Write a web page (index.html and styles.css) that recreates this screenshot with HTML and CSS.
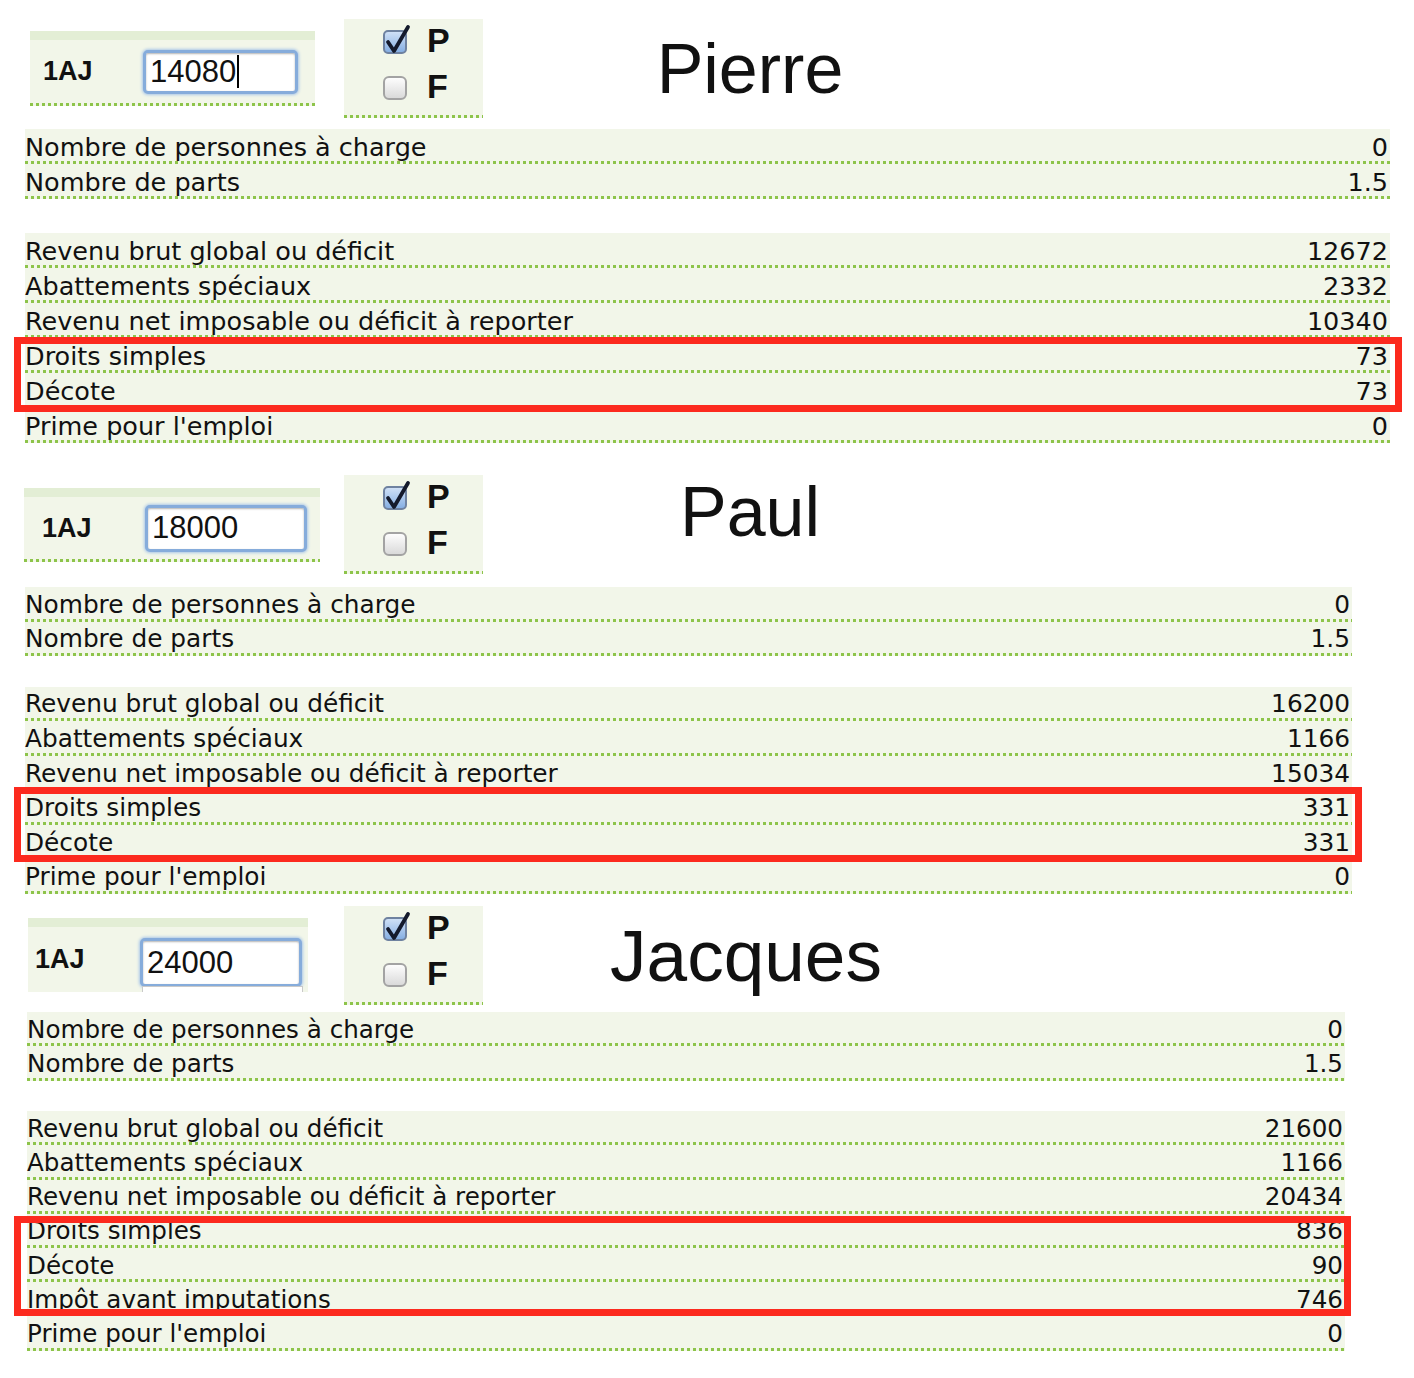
FILE: index.html
```html
<!DOCTYPE html>
<html lang="fr">
<head>
    <meta charset="UTF-8">
    <title>Simulation impôt - 1AJ</title>
    <link rel="stylesheet" href="styles.css">
</head>
<body>

    <!-- Pierre -->
    <section class="person pierre">
        <div class="top">
            <div class="aj-panel">
                <span class="aj-label">1AJ</span>
                <div class="aj-input">14080<span class="caret"></span></div>
            </div>
            <div class="pf-panel">
                <div class="pf-line">
                    <span class="box checked"><svg viewBox="0 0 28 30"><path d="M5 17 L11 26 L25 2"/></svg></span>
                    <b>P</b>
                </div>
                <div class="pf-line">
                    <span class="box"></span>
                    <b>F</b>
                </div>
            </div>
            <h1 class="name">Pierre</h1>
        </div>

        <div class="rows first">
            <div class="row"><span>Nombre de personnes à charge</span><span>0</span></div>
            <div class="row"><span>Nombre de parts</span><span>1.5</span></div>
        </div>

        <div class="rows second">
            <div class="row"><span>Revenu brut global ou déficit</span><span>12672</span></div>
            <div class="row"><span>Abattements spéciaux</span><span>2332</span></div>
            <div class="row"><span>Revenu net imposable ou déficit à reporter</span><span>10340</span></div>
            <div class="highlight">
                <div class="row"><span>Droits simples</span><span>73</span></div>
                <div class="row"><span>Décote</span><span>73</span></div>
            </div>
            <div class="row"><span>Prime pour l'emploi</span><span>0</span></div>
        </div>
    </section>

    <!-- Paul -->
    <section class="person paul">
        <div class="top">
            <div class="aj-panel">
                <span class="aj-label">1AJ</span>
                <div class="aj-input">18000</div>
            </div>
            <div class="pf-panel">
                <div class="pf-line">
                    <span class="box checked"><svg viewBox="0 0 28 30"><path d="M5 17 L11 26 L25 2"/></svg></span>
                    <b>P</b>
                </div>
                <div class="pf-line">
                    <span class="box"></span>
                    <b>F</b>
                </div>
            </div>
            <h1 class="name">Paul</h1>
        </div>

        <div class="rows first">
            <div class="row"><span>Nombre de personnes à charge</span><span>0</span></div>
            <div class="row"><span>Nombre de parts</span><span>1.5</span></div>
        </div>

        <div class="rows second">
            <div class="row"><span>Revenu brut global ou déficit</span><span>16200</span></div>
            <div class="row"><span>Abattements spéciaux</span><span>1166</span></div>
            <div class="row"><span>Revenu net imposable ou déficit à reporter</span><span>15034</span></div>
            <div class="highlight">
                <div class="row"><span>Droits simples</span><span>331</span></div>
                <div class="row"><span>Décote</span><span>331</span></div>
            </div>
            <div class="row"><span>Prime pour l'emploi</span><span>0</span></div>
        </div>
    </section>

    <!-- Jacques -->
    <section class="person jacques">
        <div class="top">
            <div class="aj-panel">
                <span class="aj-label">1AJ</span>
                <div class="aj-input">24000</div>
                <div class="suggest"></div>
            </div>
            <div class="pf-panel">
                <div class="pf-line">
                    <span class="box checked"><svg viewBox="0 0 28 30"><path d="M5 17 L11 26 L25 2"/></svg></span>
                    <b>P</b>
                </div>
                <div class="pf-line">
                    <span class="box"></span>
                    <b>F</b>
                </div>
            </div>
            <h1 class="name">Jacques</h1>
        </div>

        <div class="rows first">
            <div class="row"><span>Nombre de personnes à charge</span><span>0</span></div>
            <div class="row"><span>Nombre de parts</span><span>1.5</span></div>
        </div>

        <div class="rows second">
            <div class="row"><span>Revenu brut global ou déficit</span><span>21600</span></div>
            <div class="row"><span>Abattements spéciaux</span><span>1166</span></div>
            <div class="row"><span>Revenu net imposable ou déficit à reporter</span><span>20434</span></div>
            <div class="highlight">
                <div class="row"><span>Droits simples</span><span>836</span></div>
                <div class="row"><span>Décote</span><span>90</span></div>
                <div class="row"><span>Impôt avant imputations</span><span>746</span></div>
            </div>
            <div class="row"><span>Prime pour l'emploi</span><span>0</span></div>
        </div>
    </section>

</body>
</html>
```

FILE: styles.css
```css
/* Reset */
* {
    margin: 0;
    padding: 0;
    box-sizing: border-box;
}

body {
    font-family: "DejaVu Sans", sans-serif;
    color: #111;
    background-color: #fff;
}

/* Green dotted line + pale background, shared by panels and rows */
.aj-panel,
.pf-panel,
.row {
    background: linear-gradient(to right, #8dc44a 50%, transparent 50%) left bottom / 6px 3px repeat-x, #f2f6e9;
}

/* Header: 1AJ field, P/F boxes, name */
.top {
    display: flex;
    align-items: flex-start;
}

.aj-panel {
    position: relative;
    display: flex;
    align-items: center;
    border-top: 9px solid #e3eed5;
    padding-bottom: 3px;
}

.aj-label {
    font-family: "Liberation Sans", Arial, sans-serif;
    font-weight: bold;
    font-size: 27px;
}

.aj-input {
    display: flex;
    align-items: center;
    background-color: #fff;
    border: 3px solid #86acdb;
    border-radius: 5px;
    box-shadow: 0 0 3px 1px #a9c6e8, inset 0 1px 2px rgba(0, 0, 0, 0.3);
    padding-left: 4px;
    font-family: "Liberation Sans", Arial, sans-serif;
    font-size: 31px;
}

.caret {
    display: inline-block;
    width: 2px;
    height: 33px;
    background-color: #000;
    margin-left: 1px;
}

.pf-panel {
    width: 139px;
    height: 99px;
    padding-left: 39px;
}

.pf-line {
    display: flex;
    align-items: center;
    height: 46px;
}

.pf-line b {
    font-family: "Liberation Sans", Arial, sans-serif;
    font-size: 34px;
    margin-left: 20px;
    margin-top: -4px;
}

.box {
    position: relative;
    display: block;
    width: 24px;
    height: 24px;
    border: 2px solid #a3a3a3;
    border-radius: 6px;
    background: linear-gradient(#fdfdfd, #dadada);
}

.box.checked {
    border-color: #6f82a0;
    border-radius: 5px;
    background: linear-gradient(#cfe0f6, #86afe3);
}

.box svg {
    position: absolute;
    left: -2px;
    top: -7px;
    width: 28px;
    height: 30px;
    overflow: visible;
}

.box svg path {
    fill: none;
    stroke: #141a2c;
    stroke-width: 3.8;
    stroke-linecap: round;
    stroke-linejoin: round;
}

.name {
    align-self: center;
    width: 534px;
    text-align: center;
    font-family: "Liberation Sans", Arial, sans-serif;
    font-weight: normal;
    font-size: 70px;
    line-height: 1;
    color: #111;
}

/* Result rows */
.row {
    display: flex;
    justify-content: space-between;
    align-items: center;
    padding-right: 2px;
    white-space: nowrap;
}

.highlight {
    position: relative;
}

.highlight::after {
    content: "";
    position: absolute;
    border: 7px solid #fc2a1e;
}

/* Pierre */
.pierre {
    padding-top: 19px;
    font-size: 25.5px;
}

.pierre .aj-panel {
    margin: 12px 0 0 30px;
    width: 285px;
    height: 75px;
}

.pierre .aj-label {
    width: 113px;
    padding-left: 13px;
}

.pierre .aj-input {
    width: 155px;
    height: 44px;
}

.pierre .pf-panel {
    margin-left: 29px;
}

.pierre .rows {
    margin-left: 25px;
    width: 1365px;
}

.pierre .row {
    height: 35px;
}

.pierre .first {
    margin-top: 11px;
}

.pierre .second {
    margin-top: 34px;
}

.pierre .highlight::after {
    top: -1px;
    bottom: -4px;
    left: -11px;
    right: -12px;
}

/* Paul */
.paul {
    margin-top: 32px;
    font-size: 24.8px;
}

.paul .aj-panel {
    margin: 13px 0 0 24px;
    width: 296px;
    height: 74px;
}

.paul .aj-label {
    width: 121px;
    padding-left: 18px;
}

.paul .aj-input {
    width: 162px;
    height: 47px;
}

.paul .pf-panel {
    margin-left: 24px;
}

.paul .name {
    margin-bottom: 26px;
}

.paul .rows {
    margin-left: 25px;
    width: 1327px;
}

.paul .row {
    height: 34.6px;
}

.paul .first {
    margin-top: 13px;
}

.paul .second {
    margin-top: 30.5px;
}

.paul .highlight::after {
    top: -3px;
    bottom: -2px;
    left: -11px;
    right: -10px;
}

/* Jacques */
.jacques {
    margin-top: 12px;
    font-size: 24.6px;
}

.jacques .aj-panel {
    margin: 12px 0 0 28px;
    width: 280px;
    height: 74px;
    padding-bottom: 0;
    background: #f2f6e9;
    overflow: hidden;
}

.jacques .aj-label {
    width: 112px;
    padding-left: 7px;
}

.jacques .aj-input {
    width: 162px;
    height: 49px;
    margin-top: 6px;
}

.suggest {
    position: absolute;
    left: 114px;
    top: 59px;
    width: 161px;
    height: 14px;
    background-color: #fff;
    border: 1px solid #c9c9c9;
}

.jacques .pf-panel {
    margin-left: 36px;
}

.jacques .name {
    width: 526px;
    font-size: 73px;
}

.jacques .rows {
    margin-left: 27px;
    width: 1318px;
}

.jacques .row {
    height: 34.2px;
}

.jacques .first {
    margin-top: 7px;
}

.jacques .second {
    margin-top: 30.6px;
}

.jacques .highlight::after {
    top: 2px;
    bottom: 0;
    left: -13px;
    right: -6px;
}
```
